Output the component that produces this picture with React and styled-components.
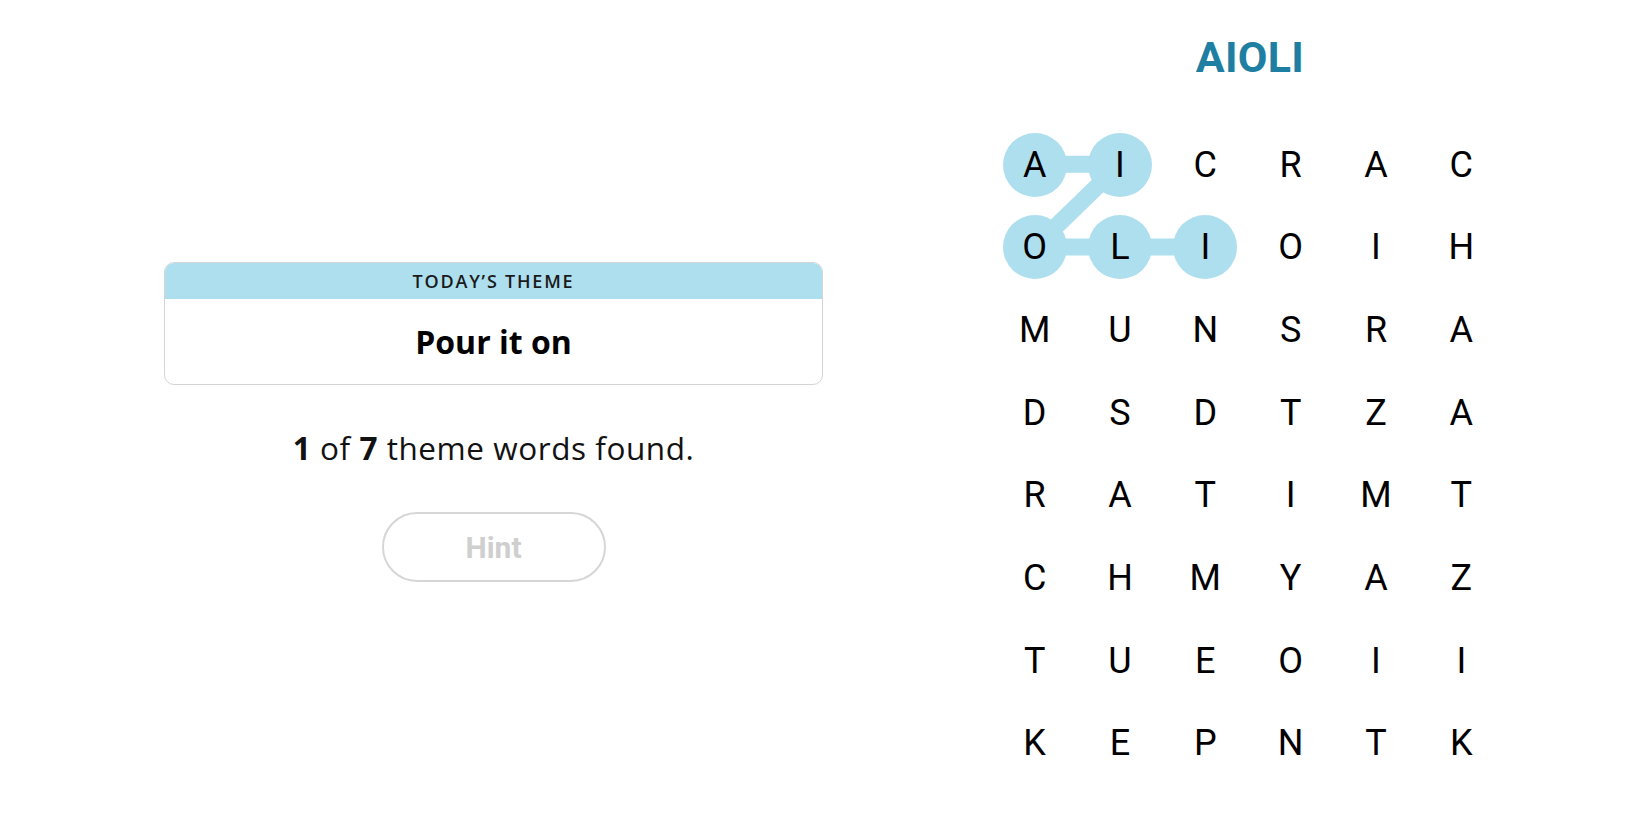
import React from 'react';
import styled, { createGlobalStyle } from 'styled-components';

const GlobalStyle = createGlobalStyle`
  body {
    margin: 0;
    background: #fff;
    font-family: "Open Sans", Roboto, "Liberation Sans", sans-serif;
    color: #121212;
  }
`;

const COLS = 6;
const CELL_W = 85.33;
const CELL_H = 82.7;
const BLUE = '#aedfee';

const letters = [
  'AICRAC',
  'OLIOIH',
  'MUNSRA',
  'DSDTZA',
  'RATIMT',
  'CHMYAZ',
  'TUEOII',
  'KEPNTK',
];

// cells of the word being traced, in order
const path = [[0, 0], [0, 1], [1, 0], [1, 1], [1, 2]];

const Page = styled.div`
  display: flex;
  align-items: center;
  height: 825px;
  padding-left: 164px;
  box-sizing: border-box;
`;

const Left = styled.div`
  width: 659px;
  display: flex;
  flex-direction: column;
  align-items: center;
  margin-top: 19px;
`;

const ThemeCard = styled.div`
  width: 100%;
  border: 1px solid #d4d4d4;
  border-radius: 10px;
  overflow: hidden;
  box-sizing: border-box;
`;

const ThemeHeader = styled.div`
  background: ${BLUE};
  height: 36px;
  display: flex;
  align-items: center;
  justify-content: center;
  font-size: 18px;
  letter-spacing: 1.8px;
  font-weight: 600;
  color: #1a1a1a;
`;

const ThemeBody = styled.div`
  height: 85px;
  display: flex;
  align-items: center;
  justify-content: center;
  font-size: 32px;
  font-weight: 700;
  color: #000;
`;

const Found = styled.p`
  margin: 43px 0 0;
  line-height: 40px;
  font-size: 31.5px;
  letter-spacing: 0.55px;
  color: #121212;
  b {
    font-weight: 700;
  }
`;

const HintButton = styled.button`
  margin-top: 44px;
  width: 224px;
  height: 70px;
  box-sizing: border-box;
  border-radius: 35px;
  border: 2px solid #d6d6d6;
  background: #fff;
  color: #cfcfcf;
  font-family: Roboto, "Liberation Sans", sans-serif;
  font-size: 30px;
  font-weight: 700;
`;

const Right = styled.div`
  margin-left: 169px;
  margin-bottom: 6px;
  display: flex;
  flex-direction: column;
  align-items: center;
`;

const Word = styled.h1`
  margin: 0 0 41px 4px;
  height: 48px;
  line-height: 46px;
  font-family: Roboto, "Liberation Sans", sans-serif;
  font-size: 43px;
  font-weight: 700;
  letter-spacing: 0.3px;
  color: #1e7fa2;
`;

const Board = styled.div`
  position: relative;
  display: grid;
  grid-template-columns: repeat(${COLS}, ${CELL_W}px);
  grid-auto-rows: ${CELL_H}px;
`;

const Trace = styled.svg`
  position: absolute;
  left: 0;
  top: 0;
  width: 100%;
  height: 100%;
  z-index: 0;
`;

const Cell = styled.div`
  position: relative;
  z-index: 1;
  display: flex;
  align-items: center;
  justify-content: center;
`;

const Letter = styled.span`
  width: 64px;
  height: 64px;
  border-radius: 50%;
  background: ${p => (p.$selected ? BLUE : 'transparent')};
  display: flex;
  align-items: center;
  justify-content: center;
  font-family: Roboto, "Liberation Sans", sans-serif;
  font-size: 36px;
  font-weight: 400;
  color: #000;
`;

const center = ([r, c]) => [CELL_W / 2 + c * CELL_W, CELL_H / 2 + r * CELL_H];

export default function App() {
  const selected = new Set(path.map(([r, c]) => `${r}-${c}`));
  const points = path.map(center).map(([x, y]) => `${x},${y}`).join(' ');

  return (
    <>
      <GlobalStyle />
      <Page>
        <Left>
          <ThemeCard>
            <ThemeHeader>TODAY’S THEME</ThemeHeader>
            <ThemeBody>Pour it on</ThemeBody>
          </ThemeCard>
          <Found>
            <b>1</b> of <b>7</b> theme words found.
          </Found>
          <HintButton disabled>Hint</HintButton>
        </Left>
        <Right>
          <Word>AIOLI</Word>
          <Board>
            <Trace>
              <polyline points={points} fill="none" stroke={BLUE} strokeWidth="17" />
            </Trace>
            {letters.map((row, r) =>
              row.split('').map((ch, c) => (
                <Cell key={`${r}-${c}`}>
                  <Letter $selected={selected.has(`${r}-${c}`)}>{ch}</Letter>
                </Cell>
              ))
            )}
          </Board>
        </Right>
      </Page>
    </>
  );
}
